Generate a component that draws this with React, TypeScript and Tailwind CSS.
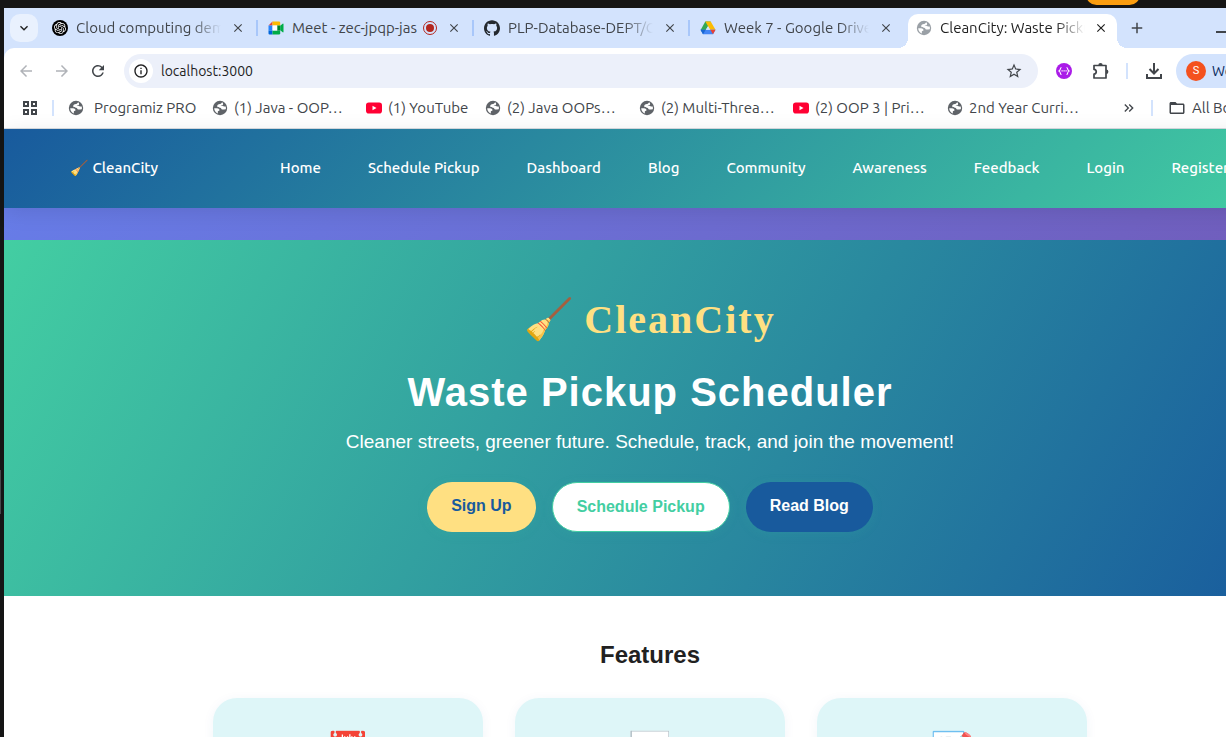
import React from "react";
import { SiOpenai, SiGithub } from "react-icons/si";
import {
  MdArrowBack, MdArrowForward, MdRefresh, MdInfoOutline, MdStarBorder,
  MdClose, MdAdd, MdKeyboardArrowDown, MdKeyboardDoubleArrowRight, MdFolderOpen,
} from "react-icons/md";

const UI = "font-['Ubuntu','Noto_Sans',sans-serif]";

function Globe({ className }: { className: string }) {
  return (
    <svg viewBox="0 0 16 16" className={`size-4 shrink-0 ${className}`} aria-hidden="true">
      <circle cx="8" cy="8" r="7.2" fill="currentColor" />
      <path d="M10.300 2.300C9.300 2.600 9.500 3.900 8 4 6.200 4.100 5 5 5.200 6.300c.2 1.400 1.600 1.300 2.900 1.400 1.200.1 1 1.600 2.200 1.800 1.200.2 2.400-.3 3.500-.2.2-1 .2-2-.1-2.900-1 .5-1.900-.1-2.600-.5-.8-.500-1.900-.1-2.400.1.200-1 1.700-.6 2.300-1.300.3-.5.100-1.500-.7-2.400z" fill="#fff" />
      <path d="M2.200 8.300c1.700.1 4-.2 5 .9.8 1 .1 1.600-.8 1.800-.8.200-.6 1.300-.4 2.500C3.800 12.800 2.200 10.700 2.200 8.300z" fill="#fff" />
    </svg>
  );
}

function YouTube() {
  return (
    <svg viewBox="0 0 16 16" className="size-4 shrink-0" aria-hidden="true">
      <rect y="2.500" width="16" height="11" rx="2.800" fill="#ff0033" />
      <path d="M6.500 5.700v4.600L10.500 8z" fill="#fff" />
    </svg>
  );
}

function Meet() {
  return (
    <svg viewBox="0 0 16 16" className="size-4 shrink-0" aria-hidden="true">
      <path d="M.5 5.500L4.500 1.500v4z" fill="#ea4335" />
      <path d="M4.500 1.500H11a1.200 1.200 0 0 1 1.200 1.200v2.800H4.500z" fill="#ffba00" />
      <path d="M.5 5.500h4v5h-4z" fill="#2684fc" />
      <path d="M.5 10.500h4v4h-3a1 1 0 0 1-1-1z" fill="#0066da" />
      <path d="M4.500 10.500h7.700v2.800A1.200 1.200 0 0 1 11 14.500H4.500z" fill="#00ac47" />
      <path d="M9 5.500h3.200v5H9z" fill="#00832d" />
      <path d="M12.200 5.800l2.500-2.100c.4-.3.800 0 .8.400v7.800c0 .4-.4.700-.8.400l-2.500-2.100z" fill="#00ac47" />
      <path d="M4.500 5.500h4.800v5H4.500z" fill="#fff" />
    </svg>
  );
}

function Drive() {
  return (
    <svg viewBox="0 0 16 16" className="size-4 shrink-0" aria-hidden="true">
      <path d="M5.300 1.500h5.400L8 6.200 3.300 14 .8 9.700z" fill="#34a853" />
      <path d="M5.300 1.500h5.400l4.800 8.300h-5.400z" fill="#fbbc04" />
      <path d="M.5 9.800h15L13 14.200H3z" fill="#4285f4" />
      <path d="M10.300 9.800h5.200L13 14.200z" fill="#ea4335" />
      <path d="M.5 9.800h5.200L3 14.200z" fill="#1967d2" />
      <path d="M8 6.200l2.100 3.600H5.900z" fill="#d3e3fd" />
    </svg>
  );
}

function Puzzle() {
  return (
    <svg viewBox="0 0 18 18" className="size-[18px]" fill="none" stroke="currentColor" strokeWidth="1.700" strokeLinejoin="round" aria-hidden="true">
      <path d="M14 16H2v-3.800c3-.3 3-4.500 0-4.800V3.500h12z" />
      <path d="M6.300 3.300a2.200 2.200 0 0 1 4.400 0zM14.200 7.500a2.200 2.200 0 0 1 0 4.400z" fill="currentColor" stroke="none" />
    </svg>
  );
}

function Download() {
  return (
    <svg viewBox="0 0 22 22" className="size-[22px]" fill="none" stroke="currentColor" strokeWidth="2" aria-hidden="true">
      <path d="M11 3v10.500M6.500 9l4.500 4.500L15.500 9M4 14v4h14v-4" />
    </svg>
  );
}

const tabs = [
  { title: "Cloud computing demand", icon: <span className="grid size-4 shrink-0 place-items-center rounded-full bg-black text-white"><SiOpenai className="size-3" /></span> },
  { title: "Meet - zec-jpqp-jas", icon: <Meet />, recording: true },
  { title: "PLP-Database-DEPT/Course", icon: <SiGithub className="size-4 shrink-0 text-[#24292f]" /> },
  { title: "Week 7 - Google Drive", icon: <Drive /> },
  { title: "CleanCity: Waste Pickup", icon: <Globe className="text-[#9aa0a6]" />, active: true },
];

const bookmarks = [
  { title: "Programiz PRO", width: "w-[144px] gap-[10px]" },
  { title: "(1) Java - OOP…", width: "w-[154px] gap-[6px]" },
  { title: "(1) YouTube", width: "w-[119px] gap-[6px]", video: true },
  { title: "(2) Java OOPs…", width: "w-[154px] gap-[6px]" },
  { title: "(2) Multi-Threa…", width: "w-[154px] gap-[6px]" },
  { title: "(2) OOP 3 | Pri…", width: "w-[154px] gap-[6px]", video: true },
  { title: "2nd Year Curri…", width: "w-[154px] gap-[6px]" },
];

const links = ["Home", "Schedule Pickup", "Dashboard", "Blog", "Community", "Awareness", "Feedback", "Login", "Register"];

function TabStrip() {
  return (
    <div className="flex h-10 bg-[#d3e3fd] text-[#41454a]">
      <button aria-label="Search tabs" className="mt-[6px] ml-[6px] grid size-7 place-items-center rounded-[10px] bg-[#e9f1fe] text-[#1f1f1f]">
        <MdKeyboardArrowDown className="size-4" />
      </button>
      <div className="ml-[6px] flex pt-[6px]">
        {tabs.map((t, i) => (
          <div
            key={t.title}
            className={`relative flex items-center pl-2 ${t.active ? "w-[209px] rounded-t-[10px] bg-white text-[#1f1f1f]" : "h-7 w-[216px]"}`}
          >
            {t.active && (
              <>
                <span className="absolute bottom-0 -left-[10px] size-[10px] bg-[radial-gradient(circle_at_0_0,transparent_10px,white_10px)]" />
                <span className="absolute -right-[10px] bottom-0 size-[10px] bg-[radial-gradient(circle_at_100%_0,transparent_10px,white_10px)]" />
              </>
            )}
            <span className={`flex w-full items-center ${t.active ? "-mt-[6px]" : ""}`}>
              {t.icon}
              <span
                className={`ml-2 overflow-hidden text-[15px] leading-5 whitespace-nowrap ${t.recording ? "w-[131px]" : "w-[145px] [mask-image:linear-gradient(to_right,black_80%,transparent)]"}`}
              >
                {t.title}
              </span>
              {t.recording && (
                <span className="grid size-[14px] place-items-center rounded-full border border-[#b3261e]">
                  <span className="size-2 rounded-full bg-[#b3261e]" />
                </span>
              )}
              <button aria-label={`Close ${t.title}`} className={t.active ? "ml-[9px]" : "ml-[10px]"}>
                <MdClose className="size-[14px]" />
              </button>
            </span>
            {i < 3 && <span className="absolute right-[2px] h-4 w-[2px] bg-[#a8c7fa]" />}
          </div>
        ))}
      </div>
      <button aria-label="New tab" className="ml-[10px] grid w-5 place-items-center text-[#41454a]">
        <MdAdd className="size-[18px]" />
      </button>
      <button aria-label="Minimize" className="ml-[69px] flex w-[14px] items-center pt-2">
        <span className="h-[2px] w-full bg-[#41454a]" />
      </button>
    </div>
  );
}

function Toolbar() {
  return (
    <div className="flex h-[46px] items-center rounded-tl-[10px] bg-white text-[#41454a]">
      <div className="flex w-[120px] items-center gap-[18px] pl-[13px]">
        <button aria-label="Back" className="text-[#b0b3b8]"><MdArrowBack className="size-[18px]" /></button>
        <button aria-label="Forward" className="text-[#b0b3b8]"><MdArrowForward className="size-[18px]" /></button>
        <button aria-label="Reload"><MdRefresh className="size-[18px]" /></button>
      </div>
      <div className="flex h-[34px] w-[914px] items-center rounded-full bg-[#ecf0fa] pr-[15px] pl-[5px]">
        <span className="grid size-6 place-items-center rounded-full bg-white"><MdInfoOutline className="size-4 text-[#1f1f1f]" /></span>
        <input aria-label="Address" defaultValue="localhost:3000" className="ml-2 min-w-0 flex-1 bg-transparent text-[14px] text-[#1f1f1f] outline-none" />
        <button aria-label="Bookmark this page"><MdStarBorder className="size-[18px]" /></button>
      </div>
      <button aria-label="API extension" className="ml-[18px] grid size-4 place-items-center rounded-full bg-[#aa1be8] text-white">
        <svg viewBox="0 0 16 16" className="size-4"><path d="M5.500 4.500C3.800 4.500 5 7.200 3 8c2 .8.800 3.500 2.500 3.500M10.500 4.500C12.200 4.500 11 7.200 13 8c-2 .8-.8 3.500-2.500 3.500" stroke="#fff" fill="none" strokeWidth="1.100" /><path d="M5.500 7.300h1.200v1.200H5.500zM7.500 7.300h1.200v1.200H7.500zM9.500 7.300h1.200v1.200H9.500z" fill="#fff" /></svg>
      </button>
      <button aria-label="Extensions" className="ml-5"><Puzzle /></button>
      <span className="ml-4 h-4 w-[2px] bg-[#d3e3fd]" />
      <button aria-label="Downloads" className="ml-[15px]"><Download /></button>
      <button className="ml-[11px] flex h-[34px] flex-1 items-center rounded-l-full bg-[#d3e3fd] pl-[10px] text-[14px] text-[#0a2a5e]">
        <span className="mr-[6px] grid size-5 place-items-center rounded-full bg-[#f4511e] font-['Roboto',sans-serif] text-[11px] text-white">S</span>
        Work
      </button>
    </div>
  );
}

function BookmarksBar() {
  return (
    <div className="flex h-[35px] items-center border-b border-[#d8dce2] bg-white pb-[6px] text-[15px] text-[#41454a]">
      <button aria-label="Apps" className="ml-[19px] grid grid-cols-2 gap-[2px]">
        {[0, 1, 2, 3].map((n) => <span key={n} className="size-[6px] border-2 border-[#41454a]" />)}
      </button>
      <span className="ml-[15px] h-4 w-[2px] bg-[#d3e3fd]" />
      <div className="ml-[14px] flex">
        {bookmarks.map((b) => (
          <a key={b.title} href="#" className={`flex items-center whitespace-nowrap ${b.width}`}>
            {b.video ? <YouTube /> : <Globe className="text-[#5f6368]" />}
            {b.title}
          </a>
        ))}
      </div>
      <button aria-label="More bookmarks" className="ml-5"><MdKeyboardDoubleArrowRight className="size-4" /></button>
      <span className="ml-[14px] h-4 w-[2px] bg-[#d3e3fd]" />
      <button className="ml-[15px] flex items-center gap-[6px] whitespace-nowrap"><MdFolderOpen className="size-[18px]" />All Bookmarks</button>
    </div>
  );
}

function Feature({ icon }: { icon: string }) {
  return (
    <article className="h-[260px] w-[270px] rounded-3xl bg-[#def6f8] pt-7 text-center text-[35px] leading-[48px] shadow-[0_2px_12px_rgba(24,90,157,0.06)]">
      {icon}
    </article>
  );
}

export default function App() {
  return (
    <div className="relative h-screen overflow-hidden bg-[#151515] pt-2 pl-1">
      <span className="absolute -top-4 left-[1086px] h-[21px] w-[54px] rounded-full bg-[#fb9d10]" />
      <span className="absolute top-[470px] left-0 h-11 w-px bg-[#45484a]" />
      <div className="min-w-[1292px]">
        <header className={`bg-[#d3e3fd] ${UI}`}>
          <TabStrip />
          <Toolbar />
          <BookmarksBar />
        </header>
        <div className="min-h-[608px] bg-[linear-gradient(135deg,#667eea_0%,#764ba2_100%)]">
          <nav className={`flex h-[79px] items-center bg-[linear-gradient(135deg,#185a9d_0%,#43cea2_100%)] pl-[66px] text-[15px] font-medium text-white shadow-[0_4px_20px_rgba(0,0,0,0.1)] ${UI}`}>
            <a href="#" className="w-[210px]">🧹 CleanCity</a>
            <div className="flex gap-[47px] whitespace-nowrap">
              {links.map((l) => <a key={l} href="#">{l}</a>)}
            </div>
          </nav>
          <main className="mt-8 font-['Liberation_Sans',sans-serif]">
            <section className="flex h-[356px] flex-col items-center bg-[linear-gradient(120deg,#43cea2_0%,#185a9d_100%)] pt-12 text-white">
              <div className="flex h-16 gap-2 font-['Liberation_Serif',serif] text-[40px] leading-[64px] font-bold tracking-[2px] text-[#ffe082]">
                <span>🧹</span>
                <span>CleanCity</span>
              </div>
              <h1 className="mt-4 text-[40px] leading-12 font-bold tracking-[1px]">Waste Pickup Scheduler</h1>
              <p className="mt-3 text-[19px] leading-7">Cleaner streets, greener future. Schedule, track, and join the movement!</p>
              <div className="mt-[26px] flex gap-4 font-bold">
                <a href="#" className="rounded-full bg-[#ffe082] px-6 py-3 text-[#185a9d] shadow-[0_2px_12px_rgba(67,206,162,0.1)]">Sign Up</a>
                <a href="#" className="rounded-full border border-[#43cea2] bg-white px-6 py-3 text-[#43cea2] shadow-[0_2px_12px_rgba(67,206,162,0.1)]">Schedule Pickup</a>
                <a href="#" className="rounded-full bg-[#185a9d] px-6 py-3 text-white shadow-[0_2px_12px_rgba(67,206,162,0.1)]">Read Blog</a>
              </div>
            </section>
            <section className="bg-white pt-10 pb-8">
              <h2 className="text-center text-[24px] leading-[38px] font-bold text-[#212121]">Features</h2>
              <div className="mt-6 flex justify-center gap-8">
                <Feature icon="📅" />
                <Feature icon="📊" />
                <Feature icon="📝" />
              </div>
            </section>
          </main>
        </div>
      </div>
    </div>
  );
}
